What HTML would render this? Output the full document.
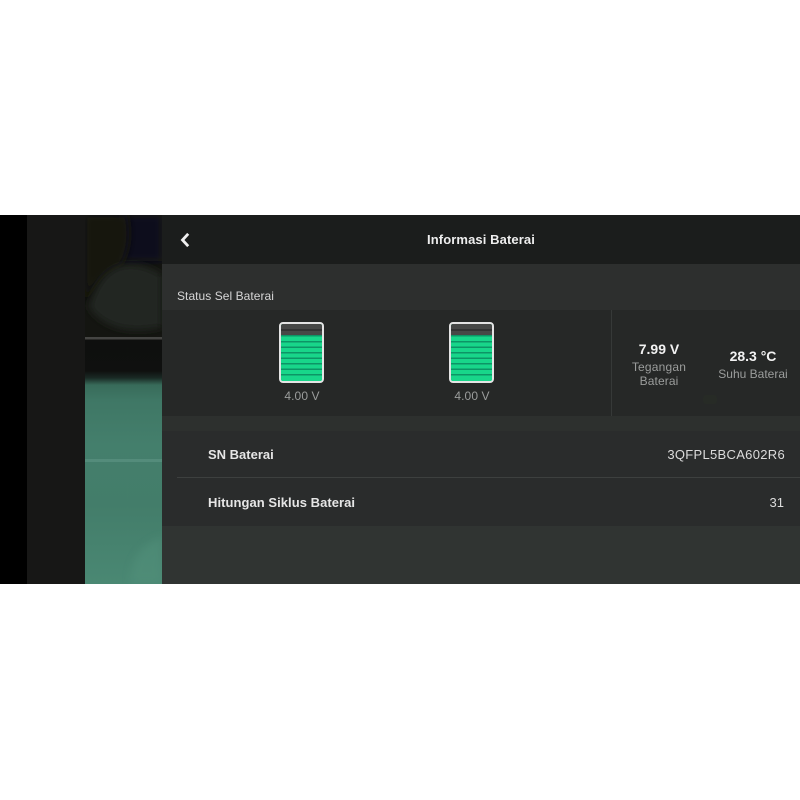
<!DOCTYPE html>
<html>
<head>
<meta charset="utf-8">
<style>
html,body{margin:0;padding:0;background:#fff;}
body{width:800px;height:800px;position:relative;overflow:hidden;font-family:"Liberation Sans",sans-serif;}
div{position:absolute;box-sizing:border-box;}
.t{white-space:nowrap;line-height:1;}
.c{transform:translateX(-50%);text-align:center;}
.b{font-weight:bold;color:#f2f2f2;}
.g{color:#9b9d9c;letter-spacing:.1px;}
.bat{width:45px;height:61px;border:2px solid #e4e4e4;border-radius:4px;background:#18d68a;overflow:hidden;}
.bat svg{position:absolute;left:0;top:0;}
</style>
</head>
<body>
<div style="left:0;top:215px;width:800px;height:369px;background:#2c2f2e;overflow:hidden;filter:blur(.35px);">
  <div style="left:0;top:0;width:27px;height:369px;background:#000;"></div>
  <div style="left:27px;top:0;width:58px;height:369px;background:#171716;"></div>

  <!-- photo strip -->
  <div style="left:85px;top:0;width:77px;height:369px;background:linear-gradient(180deg,#141511 0,#141511 122px,#0e0f0e 125px,#0f100f 156px,#1a2a25 163px,#386b5a 170px,#3f7765 185px,#447f6c 230px,#437d6a 290px,#4a8873 369px);overflow:hidden;">
    <svg width="77" height="369" style="position:absolute;left:0;top:0">
      <defs><filter id="f" x="-30%" y="-30%" width="160%" height="160%"><feGaussianBlur stdDeviation="4"/></filter></defs>
      <rect x="34" y="0" width="43" height="46" fill="#0b111a" filter="url(#f)"/>
      <path d="M0 0H42C46 20 44 36 36 50C24 52 10 64 0 88Z" fill="#15130f" filter="url(#f)"/>
      <path d="M4 92C10 70 22 52 40 50C55 48 68 54 77 60V112C50 118 20 116 4 92Z" fill="#212520" filter="url(#f)"/>
      <rect x="0" y="122" width="77" height="2.5" fill="#454543"/>
      <rect x="0" y="244" width="77" height="3" fill="#5f9685" opacity=".6"/>
      <path d="M45 369C46 350 50 332 77 322V369Z" fill="#52917c" opacity=".5" filter="url(#f)"/>
    </svg>
  </div>

  <!-- panel -->
  <div style="left:162px;top:0;width:638px;height:49px;background:#1b1d1c;"></div>
  <div style="left:162px;top:49px;width:638px;height:46px;background:#2d2f2e;"></div>
  <div style="left:162px;top:95px;width:638px;height:106px;background:#262827;"></div>
  <div style="left:162px;top:201px;width:638px;height:15px;background:#2d302e;"></div>
  <div style="left:162px;top:216px;width:638px;height:95px;background:#2a2c2c;"></div>
  <div style="left:162px;top:311px;width:638px;height:58px;background:#303432;"></div>

  <svg width="14" height="18" style="position:absolute;left:179px;top:16px"><path d="M9.2 2.8L3.5 9L9.2 15.2" fill="none" stroke="#f0f0f0" stroke-width="2.8"/></svg>
  <div class="t b c" style="left:481px;top:18px;font-size:13px;color:#eee;letter-spacing:.1px;">Informasi Baterai</div>
  <div class="t" style="left:177px;top:75px;font-size:12px;color:#d6d6d6;letter-spacing:.05px;">Status Sel Baterai</div>

  <!-- battery 1 -->
  <div class="bat" style="left:279px;top:107px;">
    <svg width="41" height="57"><rect width="41" height="12" fill="#474847"/><rect y="5.5" width="41" height="1" fill="#1f2020"/><rect y="12" width="41" height="45" fill="#18d68a"/><g fill="#0d9566"><rect y="11" width="41" height="1.5"/><rect y="17" width="41" height="1.5"/><rect y="22.5" width="41" height="1.5"/><rect y="28" width="41" height="1.5"/><rect y="33.5" width="41" height="1.5"/><rect y="39" width="41" height="1.5"/><rect y="44.5" width="41" height="1.5"/><rect y="50" width="41" height="1.5"/></g></svg>
  </div>
  <div class="t g c" style="left:302px;top:175px;font-size:12px;">4.00 V</div>

  <!-- battery 2 -->
  <div class="bat" style="left:449px;top:107px;">
    <svg width="41" height="57"><rect width="41" height="12" fill="#474847"/><rect y="5.5" width="41" height="1" fill="#1f2020"/><rect y="12" width="41" height="45" fill="#18d68a"/><g fill="#0d9566"><rect y="11" width="41" height="1.5"/><rect y="17" width="41" height="1.5"/><rect y="22.5" width="41" height="1.5"/><rect y="28" width="41" height="1.5"/><rect y="33.5" width="41" height="1.5"/><rect y="39" width="41" height="1.5"/><rect y="44.5" width="41" height="1.5"/><rect y="50" width="41" height="1.5"/></g></svg>
  </div>
  <div class="t g c" style="left:472px;top:175px;font-size:12px;">4.00 V</div>

  <div style="left:611px;top:95px;width:1px;height:106px;background:#363938;"></div>
  <div style="left:703px;top:180px;width:14px;height:9px;background:#2b3026;border-radius:3px;opacity:.35;"></div>

  <div class="t b c" style="left:659px;top:127px;font-size:14px;">7.99 V</div>
  <div class="t g c" style="left:659px;top:146px;font-size:12px;letter-spacing:.2px;">Tegangan</div>
  <div class="t g c" style="left:659px;top:160px;font-size:12px;">Baterai</div>
  <div class="t b c" style="left:753px;top:134px;font-size:14px;">28.3 °C</div>
  <div class="t g c" style="left:753px;top:153px;font-size:12px;letter-spacing:0;">Suhu Baterai</div>

  <div class="t b" style="left:208px;top:233px;font-size:13px;color:#e6e6e6;">SN Baterai</div>
  <div class="t" style="right:15px;top:233px;font-size:13px;color:#dcdcdc;letter-spacing:.3px;">3QFPL5BCA602R6</div>
  <div style="left:177px;top:262px;width:623px;height:1px;background:#3d403f;"></div>
  <div class="t b" style="left:208px;top:281px;font-size:13px;color:#e6e6e6;letter-spacing:.05px;">Hitungan Siklus Baterai</div>
  <div class="t" style="right:16px;top:281px;font-size:13px;color:#dcdcdc;">31</div>
</div>
</body>
</html>
